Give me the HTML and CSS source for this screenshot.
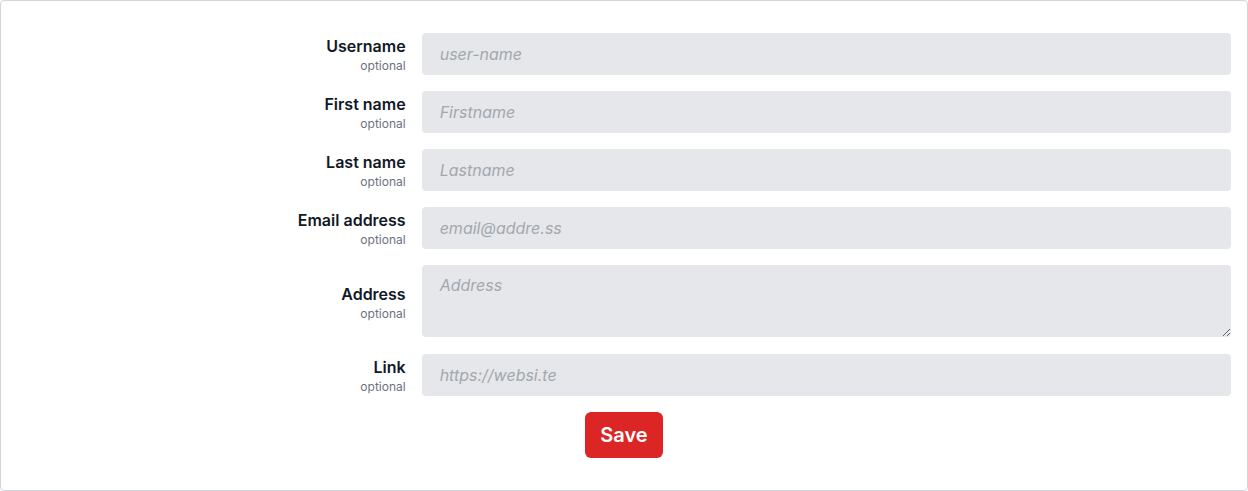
FILE: index.html
```html
<!DOCTYPE html>
<html>
<head>
<meta charset="utf-8">
<link rel="stylesheet" href="styles.css">
</head>
<body>
<form class="card">
  <div class="row">
    <label class="label"><span class="name">Username</span><span class="hint">optional</span></label>
    <div class="field"><input class="input" placeholder="user-name"></div>
  </div>
  <div class="row">
    <label class="label"><span class="name">First name</span><span class="hint">optional</span></label>
    <div class="field"><input class="input" placeholder="Firstname"></div>
  </div>
  <div class="row">
    <label class="label"><span class="name">Last name</span><span class="hint">optional</span></label>
    <div class="field"><input class="input" placeholder="Lastname"></div>
  </div>
  <div class="row">
    <label class="label"><span class="name">Email address</span><span class="hint">optional</span></label>
    <div class="field"><input class="input" placeholder="email@addre.ss"></div>
  </div>
  <div class="row">
    <label class="label"><span class="name">Address</span><span class="hint">optional</span></label>
    <div class="field"><textarea class="input textarea" placeholder="Address"></textarea></div>
  </div>
  <div class="row">
    <label class="label"><span class="name">Link</span><span class="hint">optional</span></label>
    <div class="field"><input class="input" placeholder="https://websi.te"></div>
  </div>
  <div class="actions">
    <button type="button" class="save">Save</button>
  </div>
</form>
</body>
</html>
```
FILE: styles.css
```css
* { box-sizing: border-box; }
html, body { margin: 0; padding: 0; background: #fff; }
body { font-family: Inter, "Noto Sans", sans-serif; color: #111827; }
.card {
  width: 1248px;
  height: 491px;
  border: 1px solid #d1d5db;
  border-radius: 4px;
  padding: 32px 16px 32px 16px;
  display: flex;
  flex-direction: column;
  gap: 16px;
}
.row { display: flex; align-items: center; }
.label {
  width: 33.3333%;
  padding-right: 16px;
  padding-top: 2px;
  display: flex;
  flex-direction: column;
  align-items: flex-end;
  text-align: right;
}
.name { font-size: 16px; font-weight: 600; line-height: 20px; color: #111827; }
.hint { font-size: 12px; line-height: 16px; margin-top: 2px; color: #6b7280; }
.field { width: 66.6667%; }
.input {
  display: block;
  width: 100%;
  height: 42px;
  border: 0;
  border-radius: 4px;
  background: #e5e7eb;
  padding: 0 18px;
  font-family: Inter, "Noto Sans", sans-serif;
  font-size: 16px;
  color: #111827;
  outline: none;
}
.input::placeholder { color: #a3a7ae; font-style: italic; }
.textarea { height: 72px; padding-top: 10px; resize: vertical; margin-bottom: 1px; }
.actions { display: flex; justify-content: center; }
.save {
  background: #dc2626;
  color: #fff;
  border: 0;
  border-radius: 6px;
  width: 78px;
  height: 46px;
  font-family: Inter, "Noto Sans", sans-serif;
  font-size: 20px;
  font-weight: 600;
  padding: 0;
}
```
